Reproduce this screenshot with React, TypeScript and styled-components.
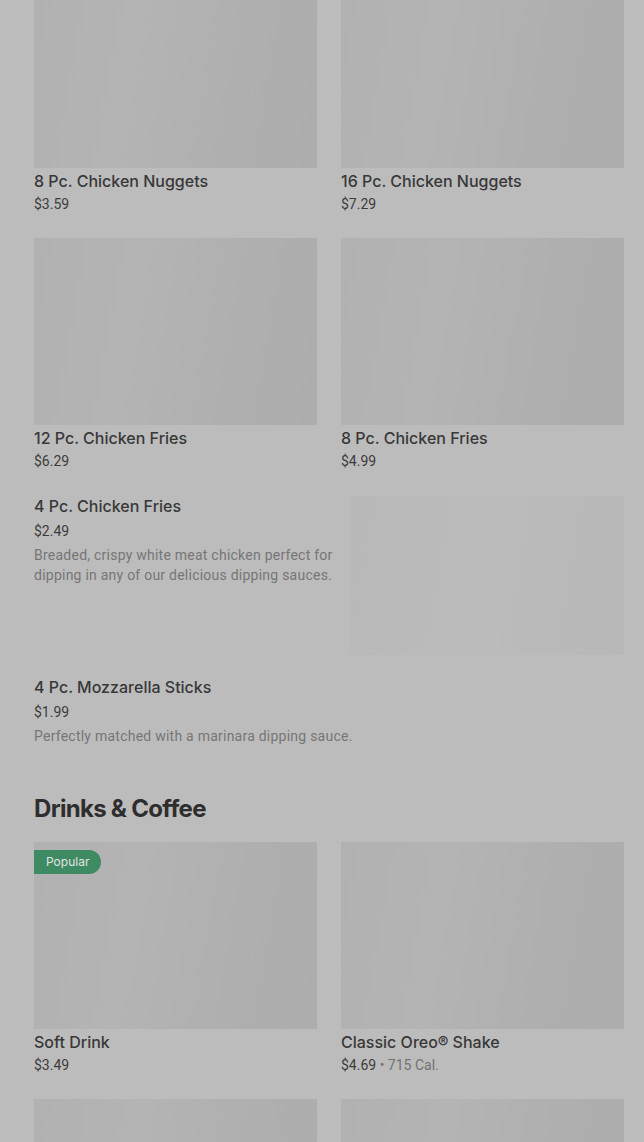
import React from "react";
import styled, { createGlobalStyle } from "styled-components";

const Global = createGlobalStyle`
  html, body { margin: 0; padding: 0; background: #bcbcbc; overflow: hidden; }
  body { font-family: Inter, Roboto, "Liberation Sans", Arial, sans-serif; color: #333; }
  * { box-sizing: border-box; }
`;

const Viewport = styled.div`
  height: 100vh;
  overflow: hidden;
`;

const Page = styled.div`
  padding: 0 20px 0 34px;
  margin-top: -19px;
`;

const Grid = styled.div`
  display: grid;
  grid-template-columns: 1fr 1fr;
  column-gap: 24px;
  row-gap: 24px;
`;

const Card = styled.div`
  display: flex;
  flex-direction: column;
  position: relative;
`;

const Placeholder = styled.div<{ $faint?: boolean }>`
  background: ${(p) =>
    p.$faint
      ? "linear-gradient(100deg, #b9b9b9 0%, #bbbbbb 50%, #b8b8b8 100%)"
      : "linear-gradient(100deg, #b1b1b1 0%, #b4b4b4 35%, #afafaf 70%, #adadad 100%)"};
`;

const CardImage = styled(Placeholder)`
  height: 187px;
`;

const Title = styled.div`
  margin-top: 1px;
  font-size: 16px;
  font-weight: 500;
  line-height: 24px;
  color: #383838;
`;

const Price = styled.div`
  margin-top: 1px;
  font-family: Roboto, "Liberation Sans", Arial, sans-serif;
  font-size: 14px;
  line-height: 20px;
  color: #3c3c3c;
`;

const Muted = styled.span`
  color: #727272;
`;

const Badge = styled.div`
  position: absolute;
  top: 8px;
  left: 0;
  height: 24px;
  padding: 0 12px 0 12px;
  border-radius: 0 12px 12px 0;
  background: #3e8a62;
  color: #e4e4e4;
  font-size: 12px;
  line-height: 24px;
`;

const ListItem = styled.div<{ $withImage?: boolean }>`
  display: grid;
  grid-template-columns: ${(p) => (p.$withImage ? "1fr 275px" : "1fr")};
  column-gap: 16px;
  margin-top: ${(p) => (p.$withImage ? "25px" : "22px")};
`;

const ListText = styled.div`
  display: flex;
  flex-direction: column;
`;

const ListTitle = styled.div`
  font-size: 16px;
  font-weight: 500;
  line-height: 20px;
  color: #383838;
`;

const ListPrice = styled.div`
  font-family: Roboto, "Liberation Sans", Arial, sans-serif;
  font-size: 14px;
  line-height: 20px;
  color: #3c3c3c;
  margin-top: 5px;
`;

const Desc = styled.div`
  font-family: Roboto, "Liberation Sans", Arial, sans-serif;
  font-size: 14px;
  line-height: 20px;
  letter-spacing: 0.24px;
  color: #767676;
  margin-top: 4px;
`;

const ListImage = styled(Placeholder)`
  height: 159px;
`;

const SectionTitle = styled.h2`
  margin: 49px 0 19px;
  font-size: 24px;
  line-height: 28px;
  font-weight: 700;
  letter-spacing: -0.7px;
  color: #2e2e2e;
`;

type Item = { name: string; price: string; cal?: string; popular?: boolean };

const GridCard = ({ item }: { item: Item }) => (
  <Card>
    <CardImage />
    {item.popular && <Badge>Popular</Badge>}
    <Title>{item.name}</Title>
    <Price>
      {item.price}
      {item.cal && <Muted> • {item.cal}</Muted>}
    </Price>
  </Card>
);

const sides: Item[] = [
  { name: "8 Pc. Chicken Nuggets", price: "$3.59" },
  { name: "16 Pc. Chicken Nuggets", price: "$7.29" },
  { name: "12 Pc. Chicken Fries", price: "$6.29" },
  { name: "8 Pc. Chicken Fries", price: "$4.99" },
];

const drinks: Item[] = [
  { name: "Soft Drink", price: "$3.49", popular: true },
  { name: "Classic Oreo® Shake", price: "$4.69", cal: "715 Cal." },
];

export default function App() {
  return (
    <>
      <Global />
      <Viewport>
        <Page>
          <Grid>
            {sides.map((it) => (
              <GridCard key={it.name} item={it} />
            ))}
          </Grid>
          <ListItem $withImage>
            <ListText>
              <ListTitle>4 Pc. Chicken Fries</ListTitle>
              <ListPrice>$2.49</ListPrice>
              <Desc>
                Breaded, crispy white meat chicken perfect for dipping in any of our
                delicious dipping sauces.
              </Desc>
            </ListText>
            <ListImage $faint />
          </ListItem>
          <ListItem>
            <ListText>
              <ListTitle>4 Pc. Mozzarella Sticks</ListTitle>
              <ListPrice>$1.99</ListPrice>
              <Desc>Perfectly matched with a marinara dipping sauce.</Desc>
            </ListText>
          </ListItem>
          <SectionTitle>Drinks &amp; Coffee</SectionTitle>
          <Grid>
            {drinks.map((it) => (
              <GridCard key={it.name} item={it} />
            ))}
            <Card>
              <CardImage />
            </Card>
            <Card>
              <CardImage />
            </Card>
          </Grid>
        </Page>
      </Viewport>
    </>
  );
}
